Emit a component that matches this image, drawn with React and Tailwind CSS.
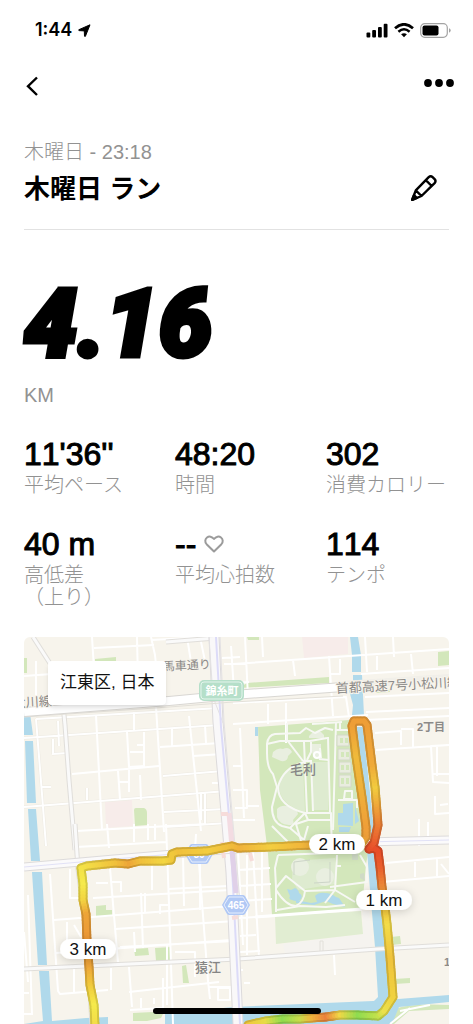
import React from "react";

const stats = [
  { value: "11'36''", label: "平均ペース" },
  { value: "48:20", label: "時間" },
  { value: "302", label: "消費カロリー" },
  { value: "40 m", label: "高低差\n（上り）" },
  { value: "--", label: "平均心拍数", heart: true },
  { value: "114", label: "テンポ" },
];

// x, y, colour by pace
const route = [
  [248, 1025, "#f0c83c"],
  [266, 1021, "#e6dc46"],
  [283, 1019, "#8fdc50"],
  [300, 1019, "#c8dc4b"],
  [312, 1018, "#f0b43c"],
  [326, 1017, "#eb823c"],
  [340, 1015, "#f0d746"],
  [358, 1015, "#8fdc50"],
  [378, 1016, "#c3e14b"],
  [384, 1011, "#ebe14b"],
  [393, 997, "#f0d23f"],
  [390, 957, "#f0c33c"],
  [387, 924, "#f3dc48"],
  [385, 907, "#f2c43c"],
  [382, 887, "#ec8c37"],
  [380, 867, "#ea5f2d"],
  [378, 851, "#e84e29"],
  [374, 848, "#e84e29"],
  [369, 849, "#e84e29"],
  [374, 843, "#e95a2d"],
  [378, 825, "#eb7d34"],
  [375, 787, "#f2cc3f"],
  [372, 765, "#efaa3a"],
  [367, 725, "#ee9e37"],
  [364, 721, "#ee9e37"],
  [354, 721, "#ee9e37"],
  [352, 726, "#ee9e37"],
  [356, 757, "#f0ba3b"],
  [362, 797, "#efae3a"],
  [366, 827, "#ef9f38"],
  [366, 837, "#ef9f38"],
  [361, 844, "#f0b43c"],
  [310, 845, "#f0b03a"],
  [270, 847, "#f3cd40"],
  [238, 848, "#f0b23b"],
  [232, 846, "#f0ba3b"],
  [207, 851, "#f3cd40"],
  [177, 852, "#f0c03c"],
  [172, 854, "#f0c83c"],
  [171, 860, "#f0c83c"],
  [163, 861, "#f3d642"],
  [140, 861, "#f0c03c"],
  [128, 864, "#eda538"],
  [115, 863, "#f0c03c"],
  [87, 866, "#f3dc46"],
  [81, 868, "#f3e148"],
  [83, 884, "#f5ea4c"],
  [83, 900, "#f3d642"],
  [86, 914, "#eda538"],
  [87, 941, "#eb9636"],
  [89, 967, "#eda538"],
  [90, 985, "#f0c83c"],
  [94, 1005, "#f5ea4c"],
  [95, 1026, "#f3dc46"],
];

const minorRoads = [
  // north west
  "M92 637l2 32M94 648l60-3M94 665l43-3M137 637l1 45M151 637l4 18 3 30M187 637l4 25M200 637l5 24M151 640l55-3",
  "M24 676l28-2M36 661v40M222 658l18-1M224 664h22M222 684l27-2M231 646l3 45",
  "M36 719l183-11M36 719l6 75 4 52M24 738l196-13M52 754l16-1M58 721l1 25M53 739v15",
  "M96 715l6 115M134 712v18M127 732l2 35 16-1M144 732v33M137 745h7M130 752h14M156 707l8 125",
  "M160 747l60-4M172 729v17M205 725l1 18M189 716l12 115M193 756l29-2M72 774l87-8M118 771l2 28M118 782h11M129 770v22M140 775l1 25",
  "M163 776l60-5M24 807l203-16M164 812l62-3M42 787h9M87 788v12M165 827l63-4M201 793v27M205 793v30",
  "M212 783h12",
  // west of the park
  "M76 847l90-5M76 831l130-7M107 824l2 24M134 824v18M148 824v16M166 824l3 80 4 120M155 824v16M196 834l-1 16",
  "M110 868l8 95M70 869v29l15 0M93 898l137-8M112 882h9v10M96 883h12M152 865v25M168 889l60-3",
  "M54 920l178-14M115 929l120-8M141 893l2 55M134 932l1 20M145 893v20M183 854l1 52M160 914v-9h8",
  "M74 925l7 12M67 922v20M56 953l175-13M120 947l114-6M175 952h20v25M129 967l3 40M50 874l8 117 2 3 48-4M74 967v25M111 968v22M130 1010l33-2v-30M129 992l90-10",
  "M199 863l9 118 2 18M200 850v60M218 988h12v12h-12zM208 987h30M141 998v10M154 998v6M24 932l4 50M24 993h5",
  "M167 945l0 60M28 895l4 120M24 1014h8",
  // east of the park
  "M245 637l3 60M262 637l1 20M293 660l2 16M233 664l116-8M349 656l100-7M329 656l4 60M340 659v15h-10M361 674l88-6M393 637l1 20M411 654l2 20M365 637l2 35M377 656v14",
  "M233 703l113-6 3 20M268 704v20M286 703v40M366 712l83-4M365 697l84-4",
  "M233 724l135-9M366 720l83-4M376 750l73-5M375 733l26-2v14M401 729l12 0v19M449 745l-18 1 2 36 16 1M437 746v30M432 774h17",
  "M233 766h8M240 728l4 90M233 790h14v18h-12M247 806h12M233 820h22",
  "M419 819v27M428 822v20M435 796v18l14-1M440 805l8-1M420 837h29",
  "M238 850l5 95M253 852l6 105M238 870l32-2M238 886l33-2M238 901l34-2M239 918l34-2M240 936l16-1M240 952l20-1M247 855v100M262 852v60",
  "M386 863l63-6M382 882l67-6M415 862v15M437 859v17M441 864l8 10M233 970l10 0",
  "M334 955l1 20M244 983h6M400 1011l30-6M390 1024l20-16",
];

const mainRoads = [
  "M33 637l18 28 10 20 4 40 4 55 6 70",
  "M75 824l3 45 8 60 6 95",
  "M24 969l62-3 152-7 140-10 71-4",
  "M166 642l50-4",
];

const parkPaths = [
  // north side
  "M267 753v-9q1-9 8-10l25-1 6-5 9 5 10-5 8 2",
  "M267 753q0 15 6 21l4 13-5 20q0 15 10 19l8 2",
  "M267 744l13-3h30l17-3",
  "M305 762q-22 5-27 25 0 19 27 26",
  "M287 723v17l16 21M304 742l3 71M311 760l2 51M328 737l2 76M336 722l-3 108",
  "M303 761h9M319 759l10 1M311 742v10l-4 8M320 748l1 10",
  "M305 813h26v7h-23zM305 813l-15 15M308 820l-12 4 6 20M331 820l1 28",
  "M338 800h19v8M345 791h7v8h-8zM312 724l30-2M336 730h14M340 722v8",
  "M290 828l14 12 4-14M272 826l16 16",
  // south side
  "M278 855l-3 13 1 19v25M278 855l80-3",
  "M276 888l10-12 19 15q-1 11-9 15-10 0-20-16",
  "M277 910l23-4 26 1 19-2",
  "M305 891l30-1 20 12M337 855l-2 35M330 887l37-5v-15l-7-12M335 890l-10 13M337 866h4",
];

function parseHex(c) {
  return [1, 3, 5].map((i) => parseInt(c.slice(i, i + 2), 16));
}

function routePieces() {
  const pieces = [];
  for (let i = 0; i < route.length - 1; i++) {
    const [x1, y1, c1] = route[i];
    const [x2, y2, c2] = route[i + 1];
    const a = parseHex(c1);
    const b = parseHex(c2);
    const n = Math.max(1, Math.round(Math.hypot(x2 - x1, y2 - y1) / 3));
    for (let k = 0; k < n; k++) {
      const t = k / n;
      const u = (k + 1) / n;
      const rgb = a.map((v, j) => Math.round(v + (b[j] - v) * t));
      pieces.push({
        x1: x1 + (x2 - x1) * t,
        y1: y1 + (y2 - y1) * t,
        x2: x1 + (x2 - x1) * u,
        y2: y1 + (y2 - y1) * u,
        color: `rgb(${rgb.join(",")})`,
        edge: `rgb(${rgb.map((v) => Math.round(v * 0.87)).join(",")})`,
      });
    }
  }
  return pieces;
}

const pieces = routePieces();

function KmPin({ x, y, children }) {
  return (
    <g>
      <rect x={x - 28} y={y - 10} width="56" height="20" rx="10" fill="#fff" filter="url(#soft)" />
      <text x={x} y={y + 6} textAnchor="middle" fontSize="17" fill="#111">
        {children}
      </text>
    </g>
  );
}

function RouteShield({ x, y, children }) {
  return (
    <g>
      <path
        d={`M${x - 14} ${y}l5-9q1-1 2-1h14q1 0 2 1l5 9-5 9q-1 1-2 1h-14q-1 0-2-1z`}
        fill="#b0c8f5"
      />
      <path
        d={`M${x - 12} ${y}l5-8h14l5 8-5 8h-14z`}
        fill="none"
        stroke="#e6eefc"
        strokeWidth="1"
      />
      <text x={x} y={y + 4} textAnchor="middle" fontSize="10" fontWeight="700" fill="#fff">
        {children}
      </text>
    </g>
  );
}

function RunMap() {
  return (
    <svg
      viewBox="24 637 425 387"
      className="block w-full font-['Liberation_Sans','Noto_Sans_CJK_JP',sans-serif]"
      role="img"
    >
      <defs>
        <filter id="soft" x="-30%" y="-50%" width="160%" height="220%">
          <feDropShadow dx="0" dy="2" stdDeviation="4" floodOpacity="0.16" />
        </filter>
      </defs>
      <rect x="24" y="637" width="425" height="387" fill="#f7f4ec" />

      {/* blocks */}
      <path d="M302 637h46v17l-44 4z" fill="#f7ecea" />
      <path d="M105 802l27-2 1 26-27 2zM107 824h25v2l-25 1z" fill="#f7ecea" />
      <path d="M283 944l80-10 0-23 6 0 4 37-88 6z" fill="#f5f3ef" />

      {/* parks */}
      <g fill="#d3e7bb">
        <path d="M258 727l91-7 6 40 7 64 6 30-2 10-4 45-90 6-4-61-3-24-5-40z" />
        <path d="M24 658h3v15h-3zM95 659l21-2v5l-21 3zM134 810q0-2 2-2h8q3 1 3 5v12l-12 1z" />
        <path d="M247 683l82-6v6l-90 5zM438 652l11-1v14l-11 1zM376 690l14-1v3l-14 1zM247 637h12v3h-11z" />
        <path d="M96 906l10-1v5h6v6l-16 1zM134 949l14-1 1 7-14 1zM155 948l16-1v13l-15 1zM182 966l4-1 3 18h-6z" />
        <path d="M133 1013l20-1 10 2-2 4-14 3-14 0z" />
        <path d="M391 937l9-1 1 8-9 1zM394 979l16-1v5l-15 1zM395 1009q15-6 54-4v4l-40 2-15 13h-5z" />
        <path d="M378 990l8-7v12l-8 4zM134 824h13v1z" />
      </g>
      <path d="M275 916l86-5 2 23-87 10z" fill="#e1edd2" />
      <path d="M303 763q-22 5-24 24 1 18 26 25zM312 762h16v48h-15z" fill="#deebd0" />
      <path d="M293 861l42-3 1 26-38 6-6-10z" fill="#deebd0" />
      <g fill="#e9efe0">
        <path d="M273 752q5-5 10-3 6-3 9 3l-4 4q0 6-7 5l-9-4zM277 809q4-4 10-3 9 0 11 8l-5 6q2 5-4 5-10-1-12-8z" />
        <circle cx="300" cy="867" r="9" />
        <circle cx="325" cy="877" r="9" />
        <path d="M309 736l4-4h8l3 3v3h-15zM311 744h10v13h-8z" />
      </g>

      {/* water */}
      <g fill="#b0d9eb">
        <path d="M24 713h6l3 22-9 0zM25 741h8l3 62-9 0zM28 809h8l4 52h-9zM32 872h10l5 93h-9zM39 971h10l3 50 34-3 22-1v7H24l19-3z" />
        <path d="M165 1014l68-7 140-6 76-6v7l-50 5-7 17H165z" />
        <path d="M350 637h8l3 18v17l-9 0 0-17zM353 675h9l2 40h-12l1-10-4-15 4-2z" />
        <path d="M354 727h9l11 103 3 20 4 40 4 57 5 46-4 10h-14l6-6-3-50-5-57-3-40-4-43z" />
        <path d="M255 727h3v9h-3zM338 813h5v-9l10-1v23l-15-1zM355 806l4 15-4 3zM339 827h12l-2 5-10 0z" />
        <path d="M287 889l4 1 4-2q4 2 4 5 5 3 1 7-4 2-8 0-4-1-2-4-2-4-3-7z" />
        <path d="M296 900l15 3 6-1-2-6q4-4 10-3 6 0 11 4l3 1 6 9-12-3-7-3-12 4-18-2zM66 710l8-1v2h-8z" />
      </g>

      {/* local roads */}
      <g fill="none" stroke="#edeae2" strokeWidth="3">
        <path d={minorRoads[2]} />
        <path d={minorRoads[5]} />
      </g>
      <g fill="none" stroke="#fff" strokeWidth="2" strokeLinejoin="round">
        {minorRoads.map((d) => (
          <path key={d} d={d} />
        ))}
        <path d="M255 917l107-8" strokeWidth="3" />
      </g>
      <g fill="none" stroke="#f7f8f4" strokeWidth="2" strokeLinejoin="round">
        {parkPaths.map((d) => (
          <path key={d} d={d} />
        ))}
      </g>
      <g fill="#e9ecdf" stroke="#d3d8c8" strokeWidth="1">
        <path d="M337 735h12v11h-12zM338 749h12v11h-12zM339 762h12v11h-12zM339 775h12v12h-12z" />
      </g>
      <path
        d="M340 738h3v5h-3zM345 738h3v5h-3zM341 752h3v5h-3zM346 752h3v5h-3zM341 765h3v5h-3zM346 765h3v5h-3zM341 778h3v6h-3zM346 778h3v6h-3z"
        fill="#d3e7bb"
      />
      <path d="M294 875v-13l16-2M330 862v20l-16 1" fill="none" stroke="#cdd5c8" />
      <circle cx="317" cy="755" r="3" fill="none" stroke="#fff" strokeWidth="2" />
      <path d="M352 853h6v7h-6zM360 874l4-1 1 8-5-3z" fill="#cfdac6" />
      <path d="M320 951v-10h3v10" fill="none" stroke="#e2e0da" />

      {/* main roads with casing */}
      {mainRoads.map((d) => (
        <g key={d} fill="none">
          <path d={d} stroke="#e0deda" strokeWidth="5" />
          <path d={d} stroke="#fafafa" strokeWidth="3" />
        </g>
      ))}
      <g fill="none">
        <path d="M214 637l4 85 8 90 5 60 7 152" stroke="#dcdadb" strokeWidth="11" />
        <path d="M214 637l4 85 8 90 5 60 7 152" stroke="#f9f8f9" strokeWidth="9" />
        <path d="M209 637l4 60 10 26M220 637l4 85 8 90 8 90" stroke="#e3e1e3" strokeWidth="1" />
        <path d="M24 867l90-8 120-10 130-7 85-2" stroke="#dddbdb" strokeWidth="9" />
        <path d="M24 867l90-8 120-10 130-7 85-2" stroke="#fbfafb" strokeWidth="7" />
        <path d="M24 867l90-8 120-10 130-7 85-2" stroke="#e1e1f6" strokeWidth="1" />
        <path d="M216 637l5 90 9 100 10 197" stroke="#dcdbf8" strokeWidth="2" />
        <path d="M229 813l3 34" stroke="#f3dce2" strokeWidth="5" />
        <path d="M232 851l4 42" stroke="#e0d0e8" strokeWidth="5" />
        <path d="M221 814h7M222 842l2 16M250 853l2 8M232 918l6-1" stroke="#f6dcda" strokeWidth="4" />
      </g>

      {/* expressway */}
      <path d="M24 717l145-10 64-5 110-6" stroke="#e3e0d9" strokeWidth="1" fill="none" />
      <path d="M24 712l145-11 64-6 110-8" stroke="#d9d7d3" strokeWidth="10" fill="none" />
      <path d="M24 712l145-11 64-6 110-8" stroke="#fff" strokeWidth="8" fill="none" />
      <path d="M343 685l106-7" stroke="#f1efe9" strokeWidth="8" fill="none" />

      {/* map labels */}
      <g fill="#8c8a88" fontSize="13">
        <g stroke="#f7f4ec" strokeWidth="2" paintOrder="stroke">
          <text x="13" y="707" transform="rotate(-3 24 707)">大川線</text>
          <text x="163" y="671" fontSize="12" transform="rotate(-3 160 670)">馬車通り</text>
          <text x="336" y="693" transform="rotate(-3 337 692)">首都高速7号小松川線</text>
          <text x="417" y="731" fontSize="11" fontWeight="700">2丁目</text>
          <text x="444" y="966" fontSize="11" fontWeight="700">1</text>
        </g>
        <text x="290" y="774" fontWeight="500" fill="#858585">毛利</text>
        <text x="195" y="972" fontWeight="500" fill="#858585">猿江</text>
      </g>
      <g>
        <rect x="199" y="680" width="45" height="21" rx="5" fill="#b5dfc9" />
        <rect x="201" y="682" width="41" height="17" rx="3" fill="none" stroke="#e4f4ec" />
        <text x="222" y="695" textAnchor="middle" fontSize="11" fontWeight="700" fill="#fff">
          錦糸町
        </text>
      </g>
      <RouteShield x={199} y={854}>50</RouteShield>
      <RouteShield x={236} y={905}>465</RouteShield>

      {/* route */}
      <g strokeWidth="9" strokeLinecap="round">
        {pieces.map((p, i) => (
          <line key={i} x1={p.x1} y1={p.y1} x2={p.x2} y2={p.y2} stroke={p.edge} />
        ))}
      </g>
      <g strokeWidth="5" strokeLinecap="round">
        {pieces.map((p, i) => (
          <line key={i} x1={p.x1} y1={p.y1} x2={p.x2} y2={p.y2} stroke={p.color} />
        ))}
      </g>

      <KmPin x={384} y={900}>1 km</KmPin>
      <KmPin x={337} y={844}>2 km</KmPin>
      <KmPin x={88} y={949}>3 km</KmPin>
    </svg>
  );
}

export default function App() {
  return (
    <div
      lang="ja"
      className="relative min-h-screen overflow-hidden bg-white text-black font-['Liberation_Sans','Noto_Sans_CJK_JP',sans-serif]"
    >
      {/* Status bar */}
      <div className="flex h-15 items-center justify-between pl-[35px] pr-[22px]">
        <div className="flex items-center gap-1.5">
          <span className="font-['Inter',sans-serif] text-lg font-semibold">1:44</span>
          <svg width="13" height="13" viewBox="0 0 13 13">
            <path d="M12 .8L.9 5.700q-.6.6.2.9l5.200.3.200 5.300q.3.700.9.100z" stroke="#000" strokeWidth="1" strokeLinejoin="round" />
          </svg>
        </div>
        <div className="flex items-center gap-1.5">
          <svg width="22" height="15" viewBox="0 0 22 15">
            <rect x="0.500" y="9.500" width="3.800" height="5" rx="1" />
            <rect x="6.200" y="7" width="3.800" height="7.500" rx="1" />
            <rect x="12" y="4" width="3.800" height="10.500" rx="1" />
            <rect x="17.700" y="0.800" width="3.800" height="13.700" rx="1" />
          </svg>
          <svg width="20" height="15" viewBox="0 0 20 15" fill="none" stroke="#000">
            <path d="M1 5.300Q10-2.700 19 5.300" strokeWidth="2.700" />
            <path d="M4.400 8.700Q10 3.900 15.600 8.700" strokeWidth="2.500" />
            <path d="M10 14.300l-2.900-3q2.900-2.300 5.800 0z" fill="#000" stroke="none" />
          </svg>
          <svg width="31" height="15" viewBox="0 0 31 15">
            <rect x="0.700" y="0.700" width="26.600" height="13.600" rx="4" fill="none" stroke="#a3a3a3" strokeWidth="1.200" />
            <rect x="2.500" y="2.500" width="16" height="10" rx="2" />
            <path d="M29 5.300q1.700.6 1.700 2.200T29 9.700z" fill="#a3a3a3" />
          </svg>
        </div>
      </div>

      {/* Nav */}
      <div className="flex h-13 items-center justify-between pl-6 pr-[19px]">
        <button aria-label="戻る">
          <svg width="16" height="20" viewBox="0 0 16 20" fill="none" stroke="#000" strokeWidth="2.400">
            <path d="M13 1.500L4 10.200l9 8.800" />
          </svg>
        </button>
        <button aria-label="メニュー" className="pb-1.5">
          <svg width="30" height="8" viewBox="0 0 30 8">
            <circle cx="4" cy="4" r="3.900" />
            <circle cx="15" cy="4" r="3.900" />
            <circle cx="26" cy="4" r="3.900" />
          </svg>
        </button>
      </div>

      <main className="px-6">
        {/* Title */}
        <div className="flex items-end justify-between border-b border-[#e2e2e2] pt-[29px] pb-6">
          <div>
            <p className="text-[20px] leading-[22px] font-light text-[#929292]">木曜日 - 23:18</p>
            <h1 className="mt-2.5 text-[26px] leading-8 font-bold">木曜日 ラン</h1>
          </div>
          <button aria-label="編集" className="mr-3 mb-1">
            <svg width="26" height="26" viewBox="0 0 26 26" fill="none" stroke="#000" strokeWidth="2.400" strokeLinejoin="round">
              <path d="M1.200 24.800L4.800 15.400 17.700 2.200q2-1.800 3.900 0l2 2q1.800 1.900 0 3.900L10.500 21zM4.800 15.400l5.700 5.600M14.800 5.200l5.900 5.800" />
              <path d="M1.200 24.800l1.800-4.700 2.900 2.900z" fill="#000" />
            </svg>
          </button>
        </div>

        {/* Distance */}
        <div className="pt-[42px]">
          <p className="font-['Roboto',sans-serif] text-[95px] leading-[104px] font-black italic [-webkit-text-stroke:5px]">
            4.16
          </p>
          <p className="mt-2 text-[20px] leading-[22px] text-[#929292]">KM</p>
        </div>

        {/* Stats */}
        <dl className="mt-8 grid grid-cols-3 gap-x-7 gap-y-8">
          {stats.map((s) => (
            <div key={s.label} className="flex flex-col">
              <dt className="order-2 mt-1 text-[20px] leading-[22px] font-light whitespace-pre text-[#929292]">
                {s.label}
              </dt>
              <dd className="flex items-center gap-2 text-[32px] leading-8 [font-kerning:none] [-webkit-text-stroke:1px]">
                {s.value}
                {s.heart && (
                  <svg width="20" height="18" viewBox="0 0 20 18" fill="none" stroke="#9b9b9b" strokeWidth="2">
                    <path d="M10 16.500L2.600 9.200C.6 7 1 4 3 2.500s5-1.200 7 1.500c2-2.700 5-3 7-1.500s2.400 4.500.4 6.700z" strokeLinejoin="round" />
                  </svg>
                )}
              </dd>
            </div>
          ))}
        </dl>

        {/* Map */}
        <div className="relative mt-[29px] overflow-hidden rounded-t-md">
          <RunMap />
          <div className="absolute top-6 left-6 rounded bg-white px-3 py-2.5 text-[17px] leading-6 text-[#111] shadow-md">
            江東区, 日本
          </div>
        </div>
      </main>

      {/* Home indicator */}
      <div className="absolute bottom-2.5 left-1/2 h-1.5 w-42 -translate-x-1/2 rounded-full bg-black" />
    </div>
  );
}
